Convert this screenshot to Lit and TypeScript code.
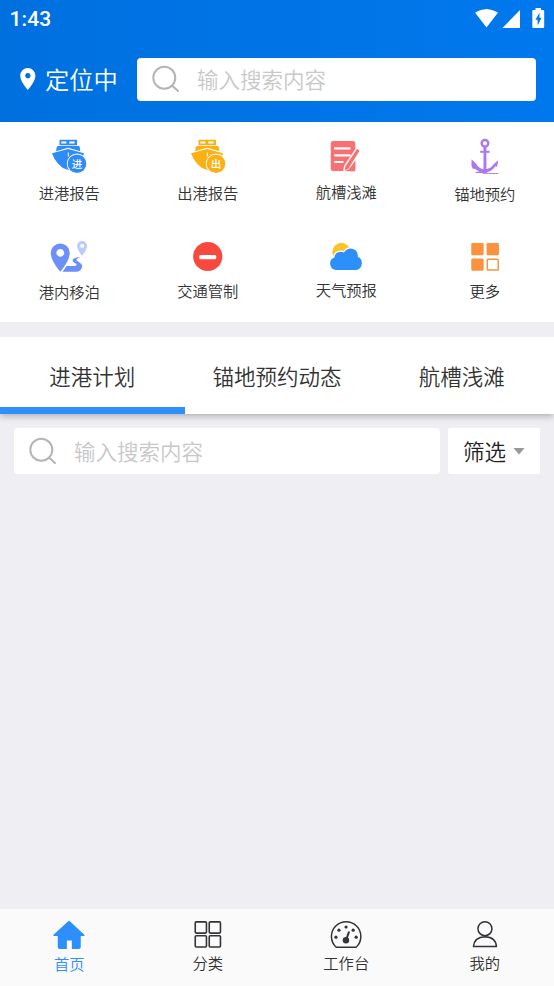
import { LitElement, html, css, svg, SVGTemplateResult } from "lit";
import { customElement } from "lit/decorators.js";
import { classMap } from "lit/directives/class-map.js";

interface Entry {
  label: string;
  drop: string;
  box: string;
  art: SVGTemplateResult;
}

const ship = (color: string, mark: string) => svg`
  <g fill=${color}>
    <path fill-rule="evenodd" d="M10.500 2.800h17.500v5.400H10.500zM12.300 4.600v1.900h5V4.600zM20.300 4.600v1.900h5.300V4.600z"/>
    <path d="M8.900 9h20.700q1 0 1.100 1l.6 4.300-12.200-3.500L7 14.300l.8-4.300q.1-1 1.100-1z"/>
    <path d="M3 16.300 19.100 12.100 35 16.300l-1 3-12 14.400-4-1.200q-5-1.200-8.700-5.500Q5 22.500 3 16.300z"/>
    <path d="M19.300 15.500v4" stroke="#fff" stroke-width="1" fill="none"/>
    <circle cx="28" cy="26.700" r="10.200" fill="#fff"/>
    <circle cx="28" cy="26.700" r="9.300"/>
    <text x="28" y="30.600" font-size="10.500" font-weight="500" text-anchor="middle" fill="#fff">${mark}</text>
  </g>`;

const entries: Entry[] = [
  { label: "进港报告", drop: "d1", box: "0 0 40 40", art: ship("#2f8bf7", "进") },
  { label: "出港报告", drop: "d1", box: "0 0 40 40", art: ship("#fbb114", "出") },
  {
    label: "航槽浅滩", drop: "d0", box: "326.250 137 40 40",
    art: svg`<rect x="331" y="141" width="24.500" height="30" rx="2.500" fill="#f96f72"/>
      <path d="M335.300 148.400h14.500M335.300 155.300h14.500M335.300 162h7.500" stroke="#fff" stroke-width="2.200" stroke-linecap="round"/>
      <path d="M357.200 147.800 345 166l-1 5.800 5.200-2.600 11.500-18.500z" fill="#f96f72" stroke="#fff" stroke-width="1.400"/>
      <path d="M349 169.300l-4 2h9.500q1 0 1-1v-9z" fill="#f96f72"/>`,
  },
  {
    label: "锚地预约", drop: "d2", box: "464.750 137 40 40",
    art: svg`<g fill="none" stroke="#aa78f3">
      <circle cx="484.700" cy="143.300" r="3.300" stroke-width="2.400"/>
      <path d="M484.700 147v24" stroke-width="2.900"/><path d="M480 151.800h9.400" stroke-width="2"/></g>
      <path d="M471.300 159.200l4.600 4.500q2.500 5.300 8.800 5.600 6.200-.3 8.600-5l4.700-4.100-1.100 6.600-1.900-.6q-2.500 4.500-7.800 5.800l-.5.900h11.500l-.2 1.200-15.500-.3-.2-.8-7-.1-.1-1 4.200-.4q-3-1-4.700-2.700h-2.200l-.3-.8-1-2.200z" fill="#aa78f3"/>`,
  },
  {
    label: "港内移泊", drop: "d1", box: "49.250 237 40 40",
    art: svg`<path fill="#6d8ff8" fill-rule="evenodd" d="M60.500 271.800q-9.500-11.300-9.500-19a9.500 9.300 0 0 1 19 0q0 7.700-9.500 19zM60.500 249a3.900 3.900 0 1 0 .1 0z"/>
      <path fill="#6d8ff8" d="M62.800 271.800l4-5.700h7.900q3.500-.7 1.400-2.500-3.900-1.700-3.100-3.800 1-2.500 7.600-2.900-4 1.600-3.900 3 .5 1.200 3.500 2.900 3.100 2.200 1.900 5-1.500 4-5.600 4z"/>
      <path fill="#b9ccfb" fill-rule="evenodd" d="M82.300 255.800q-5-6.500-5-9.800a5 4.900 0 0 1 10 0q0 3.300-5 9.800zM82.300 243.900a2 2 0 1 0 .1 0z"/>`,
  },
  {
    label: "交通管制", drop: "d0", box: "187.750 237 40 40",
    art: svg`<circle cx="207.500" cy="256.500" r="14.600" fill="#f9493f"/>
      <rect x="199" y="254.900" width="17" height="4.400" rx="1.600" fill="#fff"/>`,
  },
  {
    label: "天气预报", drop: "dm", box: "326.250 237 40 40",
    art: svg`<circle cx="341.600" cy="251.800" r="9" fill="#fbc52a"/>
      <path d="M336.500 270a6.400 6.400 0 0 1-1.900-12.400q.5-5.200 6.300-5.800 2.100 0 3.300.8 2.500-4 7-4.100 6.900.5 7 8.600 3.900 1.200 3.900 6.100-.3 5.800-5.700 6.800z" fill="#2c8ffa" stroke="#fff" stroke-width="2.600" paint-order="stroke"/>`,
  },
  {
    label: "更多", drop: "dm", box: "464.750 237 40 40",
    art: svg`<g fill="#fa923f"><rect x="471" y="243" width="12.400" height="12.200" rx="1.300"/>
      <rect x="486.300" y="243" width="12.400" height="12.200" rx="1.300"/>
      <rect x="471" y="258.600" width="12.400" height="12.200" rx="1.300"/></g>
      <rect x="487" y="259.300" width="11" height="10.800" rx=".8" fill="#fff" stroke="#fa923f" stroke-width="1.500"/>`,
  },
];

const navs: Entry[] = [
  {
    label: "首页", drop: "n1", box: "53.250 919 32 32",
    art: svg`<path fill="#2c8ffa" d="M69.300 920.400 84.800 935q.2.900-.8.900h-3v11q0 2-2 2h-6.900v-8.500h-5v8.500h-7.100q-2 0-2-2v-11h-3.700q-1 0-.8-.9z"/>`,
  },
  {
    label: "分类", drop: "n0", box: "191.750 919 32 32",
    art: svg`<g fill="none" stroke="#333338" stroke-width="1.600"><rect x="195" y="921.900" width="11.200" height="11.200" rx="1"/>
      <rect x="209" y="921.900" width="11.200" height="11.200" rx="1"/><rect x="195" y="935.800" width="11.200" height="11.200" rx="1"/>
      <rect x="209" y="935.800" width="11.200" height="11.200" rx="1"/></g>`,
  },
  {
    label: "工作台", drop: "n0", box: "330.250 919 32 32",
    art: svg`<path d="M336.500 947.200q-4.800-4.400-4.800-10.800a14.700 14.700 0 0 1 29.400 0q0 6.400-4.800 10.800z" fill="none" stroke="#333338" stroke-width="1.500" stroke-linejoin="round"/>
      <g fill="#333338"><circle cx="336.200" cy="937.200" r="1.600"/><circle cx="339.200" cy="930.200" r="1.600"/><circle cx="346.300" cy="927" r="1.600"/>
      <circle cx="353.400" cy="930.200" r="1.600"/><circle cx="356.400" cy="937.200" r="1.600"/><circle cx="346.200" cy="940.200" r="3.200"/></g>
      <path d="M346.500 939.500l2.600-7.200" stroke="#333338" stroke-width="2" stroke-linecap="round"/>`,
  },
  {
    label: "我的", drop: "n0", box: "468.750 919 32 32",
    art: svg`<g fill="none" stroke="#333338" stroke-width="1.500" stroke-linejoin="round"><circle cx="484.700" cy="928.700" r="7"/>
      <path d="M473.200 946.600q.8-9.700 11.500-9.900 10.800.2 11.500 9.900z"/></g>`,
  },
];

const lens = html`<svg class="lens" viewBox="0 0 30 30" fill="none" stroke="#b4b4b4" stroke-width="2" stroke-linecap="round">
  <circle cx="12.300" cy="12.800" r="11"/><path d="M20.200 20.800 26 26"/></svg>`;

@customElement("app-root")
export class AppRoot extends LitElement {
  static styles = css`
    :host {
      display: flex;
      flex-direction: column;
      width: 554px;
      height: 986px;
      overflow: hidden;
      background: #eeeef3;
      color: #333;
      font-family: "Noto Sans CJK SC", sans-serif;
      font-weight: 350;
      font-size: 15.300px;
    }
    * { box-sizing: border-box; }
    svg { display: block; flex: none; }
    header { flex: none; height: 122px; background: linear-gradient(90deg, #0070df, #0078ed); color: #fff; }
    .status { display: flex; align-items: center; height: 38px; padding: 0 9px 0 9.500px; justify-content: space-between; }
    .time { font: 500 21px Roboto, sans-serif; letter-spacing: 0.100px; }
    .place { display: flex; align-items: center; height: 43px; margin-top: 20px; padding: 0 18px 0 19px; }
    .pin { width: 18px; height: 24px; margin-top: -1px; }
    .here { width: 91px; margin: -2px 0 0 8px; font-size: 24.300px; line-height: 43px; white-space: nowrap; }
    .search { display: flex; align-items: center; flex: 1; height: 43px; padding-left: 15px; border-radius: 4px; background: #fff; color: #c8c8c8; font-size: 21.500px; }
    .search span { line-height: 40px; margin-top: -2px; }
    .place .search { margin-left: 1px; }
    .lens { width: 30px; height: 30px; margin-right: 15px; }
    .grid { flex: none; display: grid; grid-template-columns: repeat(4, 1fr); grid-template-rows: 100px 85px; height: 200px; padding-top: 15px; background: #fff; }
    .cell { display: flex; flex-direction: column; align-items: center; }
    .cell svg { width: 40px; height: 40px; }
    .label { line-height: 22px; }
    .d0 { margin-top: 3px; } .d1 { margin-top: 4px; } .d2 { margin-top: 5px; } .dm { margin-top: 2px; }
    .cell:nth-child(n + 5) .d1 { margin-top: 3px; }
    .cell:nth-child(n + 5) .d0 { margin-top: 2px; }
    .cell:nth-child(n + 5) .dm { margin-top: 1px; }
    .cell:nth-child(8) .dm { margin-top: 2px; }
    .tabs { flex: none; display: flex; height: 77px; margin-top: 15px; background: #fff; box-shadow: 0 2px 7px rgba(0, 0, 0, 0.280); clip-path: inset(0 0 -12px 0); font-size: 21.500px; }
    .tab { flex: 1; line-height: 77px; text-align: center; border-bottom: 7px solid transparent; height: 77px; }
    .active { border-color: #2f8ffb; }
    .filters { display: flex; gap: 8px; padding: 14px 14px 0; flex: 1; }
    .filters .search { height: 46px; }
    .filters .search span { margin-top: 0; }
    .filters .lens { margin-top: 2px; }
    .pick { display: flex; align-items: center; width: 92px; height: 46px; padding-left: 15px; border-radius: 2px; background: #fff; font-size: 21.500px; color: #222; }
    .pick span { line-height: 44px; margin-top: 0; }
    .caret { width: 12px; height: 7px; margin-left: 7px; background: #999; clip-path: polygon(0 0, 100% 0, 50% 100%); }
    nav { flex: none; display: grid; grid-template-columns: repeat(4, 1fr); height: 77px; padding-top: 10px; background: #fafafa; }
    nav .cell svg { width: 32px; height: 32px; }
    .n0 { margin-top: 0; } .n1 { margin-top: 1px; }
    .on { color: #2f8ffb; }
  `;

  private cell(e: Entry, on = false) {
    return html`<div class=${classMap({ cell: true, on })}>
      <svg viewBox=${e.box}>${e.art}</svg>
      <div class="label ${e.drop}">${e.label}</div>
    </div>`;
  }

  render() {
    return html`
      <header>
        <div class="status">
          <span class="time">1:43</span>
          <svg width="74" height="26" viewBox="471 6 74 26" fill="#fff">
            <path d="M475 12.500q11.500-7 23 0L486.500 27.500z"/>
            <path d="M520 10v18h-17.500z"/>
            <path fill-rule="evenodd" d="M535.500 8h5.500v2h2q1.200 0 1.200 1.200v15.600q0 1.200-1.200 1.200h-9.500q-1.200 0-1.200-1.200V11.200q0-1.200 1.200-1.200h2zM539.600 12.500l-4.200 7.200h2.200v5.800l4-7.700h-2.200z"/>
          </svg>
        </div>
        <div class="place">
          <svg class="pin" viewBox="0 0 18 24"><path fill="#fff" fill-rule="evenodd" d="M8.800 23Q1.200 14 1.200 8.700a7.600 7.700 0 0 1 15.200 0Q16.400 14 8.800 23zM8.800 6a2.700 2.700 0 1 0 .1 0z"/></svg>
          <span class="here">定位中</span>
          <div class="search">${lens}<span>输入搜索内容</span></div>
        </div>
      </header>
      <section class="grid">${entries.map((e) => this.cell(e))}</section>
      <div class="tabs">
        ${["进港计划", "锚地预约动态", "航槽浅滩"].map((t, i) => html`<div class=${classMap({ tab: true, active: i === 0 })}>${t}</div>`)}
      </div>
      <main class="filters">
        <div class="search">${lens}<span>输入搜索内容</span></div>
        <div class="pick"><span>筛选</span><i class="caret"></i></div>
      </main>
      <nav>${navs.map((e, i) => this.cell(e, i === 0))}</nav>
    `;
  }
}
